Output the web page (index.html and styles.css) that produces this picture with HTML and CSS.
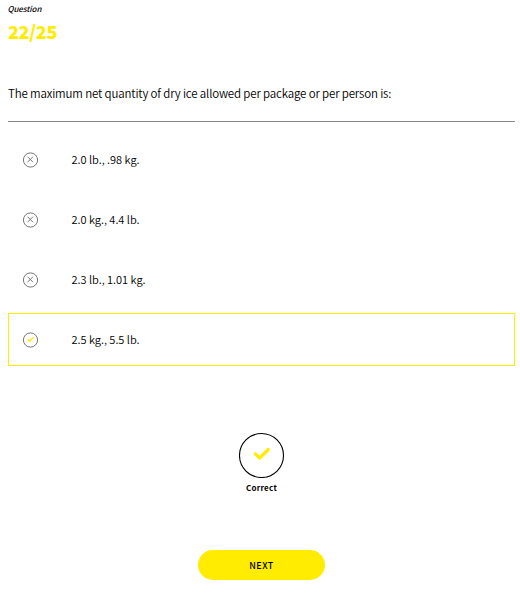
FILE: index.html
```html
<!DOCTYPE html>
<html lang="en">
<head>
<meta charset="utf-8">
<title>Quiz</title>
<link rel="stylesheet" href="styles.css">
</head>
<body>
<main class="quiz">
  <header class="progress">
    <div class="label">Question</div>
    <div class="count">22/25</div>
  </header>
  <h1 class="question">The maximum net quantity of dry ice allowed per package or per person is:</h1>
  <ul class="answers">
    <li class="answer"><svg class="mark" viewBox="0 0 16 16"><circle cx="7.500" cy="8" r="7.100"/><path d="M4.500 4.700l5.500 5.500M10 4.700l-5.500 5.500"/></svg><span class="text">2.0 lb., .98 kg.</span></li>
    <li class="answer"><svg class="mark" viewBox="0 0 16 16"><circle cx="7.500" cy="8" r="7.100"/><path d="M4.500 4.700l5.500 5.500M10 4.700l-5.500 5.500"/></svg><span class="text">2.0 kg., 4.4 lb.</span></li>
    <li class="answer"><svg class="mark" viewBox="0 0 16 16"><circle cx="7.500" cy="8" r="7.100"/><path d="M4.500 4.700l5.500 5.500M10 4.700l-5.500 5.500"/></svg><span class="text">2.3 lb., 1.01 kg.</span></li>
    <li class="answer correct"><svg class="mark" viewBox="0 0 16 16"><circle cx="7.500" cy="8" r="7.100"/><path class="tick" d="M4.500 7.300l2 2 4-4"/></svg><span class="text">2.5 kg., 5.5 lb.</span></li>
  </ul>
  <div class="result">
    <svg class="badge" viewBox="0 0 46 46"><circle cx="22.500" cy="23.500" r="22"/><path d="M16.300 21.800l4.400 4.200 8.600-8.500"/></svg>
    <div class="status">Correct</div>
  </div>
  <button class="next">NEXT</button>
</main>
</body>
</html>
```
FILE: styles.css
```css
* { box-sizing: border-box; }
body { margin: 0; background: #fff; color: #000; font-family: "Noto Sans CJK SC", "Noto Sans", sans-serif; }
.quiz { width: 520px; height: 600px; padding: 3px 5px 0 8px; display: flex; flex-direction: column; }
.label { height: 12px; margin-left: -.5px; font-size: 8px; line-height: 12px; font-style: italic; font-weight: 500; letter-spacing: -.1px; }
.count { height: 24px; margin-top: 4px; font-size: 18px; line-height: 24px; font-weight: 900; letter-spacing: -.35px; color: #ffec00; }
.question { margin: 40px 0 0; height: 39px; border-bottom: 1px solid #888; font-size: 11.5px; line-height: 20px; font-weight: 350; letter-spacing: -.15px; white-space: nowrap; }
.answers { list-style: none; margin: 11px 0 0; padding: 0; display: flex; flex-direction: column; gap: 7px; }
.answer { height: 53px; padding-left: 14px; display: flex; align-items: center; gap: 32px; border: 1px solid transparent; font-size: 11px; font-weight: 350; white-space: nowrap; }
.text { padding: 0 0 2px .5px; }
.correct { border-color: #ffec00; }
.mark { width: 16px; height: 16px; fill: none; stroke: #777; stroke-width: 1; }
.mark .tick { stroke: #ffec00; stroke-width: 1.4; }
.result { margin-top: 66px; display: flex; flex-direction: column; align-items: center; }
.badge { width: 46px; height: 46px; fill: none; stroke: #000; stroke-width: 1.1; }
.badge path { stroke: #ffec00; stroke-width: 3.2; stroke-linecap: round; }
.status { margin-top: 4px; font-size: 8px; line-height: 12px; font-weight: 700; letter-spacing: .25px; }
.next { width: 127px; height: 30px; margin: 56px auto 0; padding: 0; border: 0; border-radius: 15px; background: #ffec00; color: #000; font: 500 9px "Noto Sans CJK SC", "Noto Sans", sans-serif; letter-spacing: .4px; }
```
